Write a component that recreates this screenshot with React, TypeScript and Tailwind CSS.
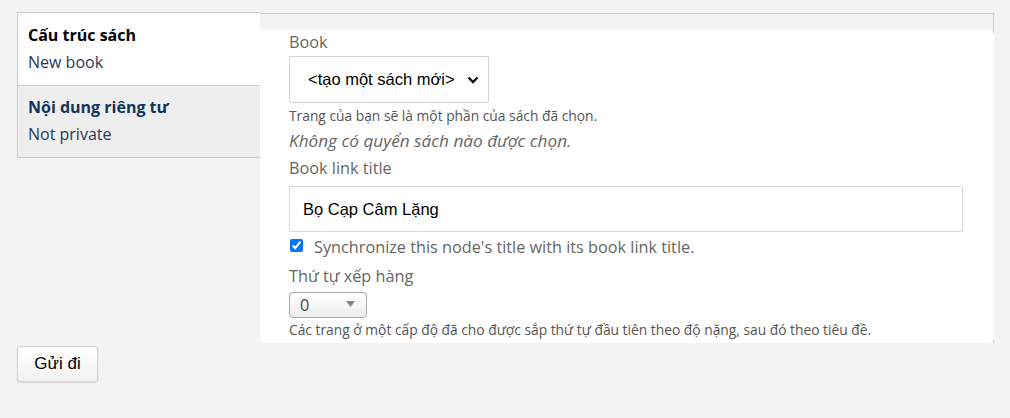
import React from "react";

export default function App() {
  return (
    <div className="w-[1010px] h-[418px] bg-[#f3f3f3] overflow-hidden font-['Open_Sans',sans-serif]">
      <div className="flex items-start pl-[17px] pt-[12px]">
        {/* Vertical tabs */}
        <div className="w-[243px] shrink-0 border-l border-t border-b border-[#cccccc]">
          <div className="bg-white px-[10px] py-[9px] leading-[27px] text-[16px]">
            <div className="font-bold text-black">Cấu trúc sách</div>
            <div className="text-[#1f3a5c]">New book</div>
          </div>
          <div className="bg-[#eeeeee] border-t border-[#cccccc] px-[10px] pt-[8px] pb-[9px] leading-[27px] text-[16px]">
            <div className="font-bold text-[#12355b]">Nội dung riêng tư</div>
            <div className="text-[#1f3a5c]">Not private</div>
          </div>
        </div>

        {/* Main panel */}
        <div className="w-[734px] mt-[1px] border-t border-r border-[#cccccc] pt-[16px] h-[330px] flex flex-col">
          <div className="bg-white rounded-tr-[5px] rounded-b-[5px] mr-[-1px] h-[313px] pl-[29px] pr-[30px]">
            <div className="text-[16.25px] leading-[26px] text-[#666666] mt-[-1px]">Book</div>
            <div className="mt-[1px] w-[200px] h-[47px] border border-[#d4d4d4] rounded-[2px] flex items-center justify-between pl-[18px] pr-[9px] font-['Liberation_Sans',Arial,sans-serif] text-[16.5px] text-black">
              <span>&lt;tạo một sách mới&gt;</span>
              <svg width="12" height="8" viewBox="0 0 12 8" className="mt-[1px]">
                <path d="M1.5 1.5 L6 6 L10.5 1.5" fill="none" stroke="#111" strokeWidth="2.4" />
              </svg>
            </div>
            <div className="mt-[3px] text-[13.8px] leading-[20px] text-[#555555]">Trang của bạn sẽ là một phần của sách đã chọn.</div>
            <div className="mt-[2px] text-[17.2px] leading-[26px] italic text-[#666666]">Không có quyển sách nào được chọn.</div>
            <div className="text-[16.25px] leading-[26px] text-[#666666] mt-[1px]">Book link title</div>
            <div className="mt-[5px] w-[674px] h-[46px] border border-[#d9d9d9] rounded-[2px] flex items-center pl-[13px] font-['Liberation_Sans',Arial,sans-serif] text-[16.5px] text-black">
              Bọ Cạp Câm Lặng
            </div>
            <div className="mt-[2px] h-[26px] flex items-center text-[16.25px] text-[#666666]">
              <input type="checkbox" defaultChecked className="w-[13px] h-[13px] ml-[1px] mr-[11px] mt-[-3px] accent-[#0075ff]" />
              <span>Synchronize this node's title with its book link title.</span>
            </div>
            <div className="mt-[3px] text-[16.25px] leading-[26px] text-[#666666]">Thứ tự xếp hàng</div>
            <div className="mt-[3px] w-[78px] h-[26px] border border-[#aaaaaa] rounded-[4px] bg-gradient-to-b from-white to-[#eeeeee] flex items-center justify-between pl-[10px] pr-[11px] text-[16.25px] text-[#444444]">
              <span>0</span>
              <svg width="9" height="6" viewBox="0 0 9 6" className="mt-[-3px]">
                <path d="M0 0 L9 0 L4.5 6 Z" fill="#888888" />
              </svg>
            </div>
            <div className="mt-[2px] text-[13.8px] leading-[20px] text-[#555555]">Các trang ở một cấp độ đã cho được sắp thứ tự đầu tiên theo độ nặng, sau đó theo tiêu đề.</div>
          </div>
        </div>
      </div>

      <div className="pl-[17px] mt-[3px]">
        <button className="w-[81px] h-[36px] border border-[#d6d6d6] rounded-[3px] bg-gradient-to-b from-white to-[#f1f1f1] shadow-[0_1px_2px_rgba(0,0,0,0.12)] font-['Liberation_Sans',Arial,sans-serif] text-[17px] text-black">
          Gửi đi
        </button>
      </div>
    </div>
  );
}
